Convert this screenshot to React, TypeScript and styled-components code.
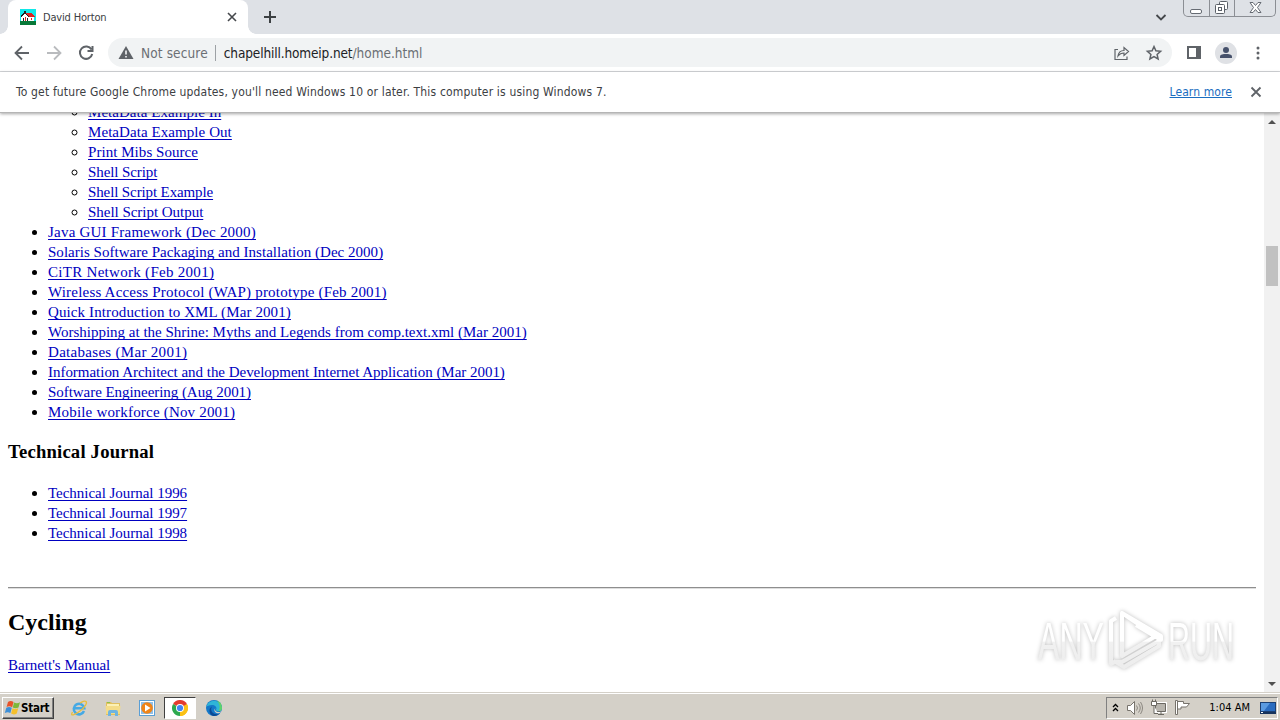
import React from 'react';
import styled, { createGlobalStyle, css } from 'styled-components';

const Global = createGlobalStyle`
  html, body { margin: 0; padding: 0; overflow: hidden; }
  * { box-sizing: border-box; }
`;
const ui = `'DejaVu Sans Condensed', 'Noto Sans', sans-serif`;

const Screen = styled.div`
  width: 1280px; height: 720px; display: flex; flex-direction: column;
  background: #fff; font-family: ${ui}; overflow: hidden;
`;
const TabStrip = styled.div`
  height: 34px; flex: none; background: #dee1e6; display: flex; align-items: flex-start;
`;
const Tab = styled.div`
  width: 240px; height: 34px; margin-left: 8px; background: #fff; border-radius: 8px 8px 0 0;
  display: flex; align-items: center; padding: 0 10px 0 12px; position: relative;
  &::before, &::after { content: ''; position: absolute; bottom: 0; width: 8px; height: 8px; }
  &::before { left: -8px; background: radial-gradient(circle at 0 0, transparent 7.5px, #fff 8px); }
  &::after { right: -8px; background: radial-gradient(circle at 100% 0, transparent 7.5px, #fff 8px); }
`;
const Text = styled.span<{ $ls?: number; $size?: number; $color?: string }>`
  white-space: pre; letter-spacing: ${p => p.$ls ?? 0}px; font-size: ${p => p.$size ?? 12}px;
  color: ${p => p.$color ?? '#3c4043'};
`;
const TabTitle = styled(Text)`margin-left: 7px; flex: 1;`;
const NewTab = styled.div`width: 28px; height: 34px; margin-left: 8px; display: flex; align-items: center; justify-content: center;`;
const Spacer = styled.div`flex: 1;`;
const TabSearch = styled.div`width: 24px; height: 34px; display: flex; align-items: center; justify-content: center; margin-right: 10px;`;
const WindowButtons = styled.div`
  display: flex; width: 93px; height: 17px; margin-right: 4px; border: 1px solid #8b8e94; border-top: 0;
  border-radius: 0 0 5px 5px;
`;
const WindowButton = styled.div<{ $w: number }>`
  width: ${p => p.$w}px; display: flex; align-items: center; justify-content: center;
  & + & { border-left: 1px solid #8b8e94; }
`;
const Toolbar = styled.div`
  height: 38px; flex: none; background: #fff; border-bottom: 1px solid #d5d7da; display: flex; align-items: center;
`;
const NavIcons = styled.div`display: flex; gap: 12px; padding-left: 12px; width: 108px;`;
const AddressBar = styled.div`
  width: 1064px; height: 29px; border-radius: 15px; background: #f1f3f4; display: flex; align-items: center; padding: 0 9px 0 8px;
`;
const WarningLabel = styled(Text)`margin-left: 5px;`;
const BarIcons = styled.div`display: flex; gap: 14px;`;
const Divider = styled.i`width: 1px; height: 16px; background: #9da1a5; margin: 0 8px 0 7px;`;
const Actions = styled.div`display: flex; align-items: center; gap: 11px; padding-left: 12px;`;
const Avatar = styled.div`width: 22px; height: 22px; border-radius: 50%; background: #dfe1e5; display: flex; align-items: center; justify-content: center;`;
const InfoBar = styled.div`
  height: 41px; flex: none; background: #fff; display: flex; align-items: center; padding: 0 18px 1px 16px;
  border-bottom: 1px solid #b5b5b5; box-shadow: 0 1px 3px rgba(0,0,0,.35); position: relative; z-index: 1;
`;
const LearnMore = styled(Text)`text-decoration: underline; margin-right: 18px;`;
const Viewport = styled.div`height: 579px; flex: none; display: flex; position: relative; overflow: hidden;`;
const Page = styled.div`
  flex: 1; overflow: hidden; padding: 0 8px; color: #000; font: 15px/20px 'Liberation Serif', serif;
`;
const List = styled.ul<{ $nested?: boolean }>`
  margin: 0; padding-left: 40px; list-style: ${p => (p.$nested ? 'circle' : 'disc')}; font-size: 16px;
  li { height: 20px; }
`;
const Outer = styled.div`margin-top: -11px;`;
const Indent = styled.div`padding-left: 40px;`;
const Link = styled.a<{ $ls?: number }>`
  color: #0000c0; font-size: 15px; text-decoration: underline; text-underline-offset: 2px; text-decoration-thickness: 1px; text-decoration-skip-ink: none;
  white-space: pre; letter-spacing: ${p => p.$ls ?? 0}px;
`;
const H3 = styled.h3`font-size: 18.7px; line-height: 22px; margin: 19px 0 20px; letter-spacing: 0.18px;`;
const Rule = styled.div`height: 2px; margin: 44px 0 19px; border-top: 1px solid #8e8e8e; border-bottom: 1px solid #dedede;`;
const H2 = styled.h2`font-size: 24px; line-height: 28px; margin: 0 0 19px;`;
const ScrollBar = styled.div`
  width: 16px; background: #f1f1f1; display: flex; flex-direction: column; align-items: center; padding: 6px 0 6px;
`;
const Thumb = styled.div`width: 12px; height: 40px; background: #c1c1c1; margin-top: 122px;`;
const Arrow = styled.i<{ $down?: boolean }>`
  width: 0; height: 0; border: 4px solid transparent;
  ${p => p.$down ? css`border-top-color: #505050; border-bottom: 0;` : css`border-bottom-color: #505050; border-top: 0; margin-top: 1px;`}
`;
const Watermark = styled.div`
  position: absolute; left: 1036px; top: 495px; height: 66px;
  filter: drop-shadow(0 0 2px rgba(0,0,0,.25));
`;
const Taskbar = styled.div`
  flex: 1; background: #d4d0c8; border-top: 1px solid #d4d0c8; box-shadow: inset 0 1px #fff; display: flex; align-items: center; padding: 3px 2px 1px;
`;
const StartButton = styled.div`
  width: 52px; height: 22px; border: 1px solid; border-color: #fff #404040 #404040 #fff; box-shadow: inset -1px -1px #808080;
  display: flex; align-items: center; padding-left: 1px; font: bold 11.5px ${ui}; letter-spacing: -0.25px; color: #000;
`;
const QuickLaunch = styled.div`display: flex; margin-left: 8px; align-items: center;`;
const TaskItem = styled.div<{ $active?: boolean }>`
  width: ${p => (p.$active ? 32 : 34)}px; height: 22px; display: flex; align-items: center; justify-content: center; margin-right: ${p => p.$active ? 1 : 0}px;
  ${p => p.$active && css`background: #fff; border: 1px solid; border-color: #404040 #fff #fff #404040;`}
`;
const Tray = styled.div`
  width: 172px; height: 22px; border: 1px solid; border-color: #808080 #fff #fff #808080; display: flex; align-items: center; padding: 0 1px 0 4px;
`;
const TrayIcons = styled.div`display: flex; align-items: center; flex: 1; gap: 6px;`;
const Clock = styled(Text)`margin-right: 10px;`;

type LinkItem = [string, number];
const nested: LinkItem[] = [
  ['MetaData Example In', 0.04], ['MetaData Example Out', 0.07], ['Print Mibs Source', 0.05],
  ['Shell Script', -0.1], ['Shell Script Example', -0.12], ['Shell Script Output', -0.03],
];
const articles: LinkItem[] = [
  ['Java GUI Framework (Dec 2000)', 0.22], ['Solaris Software Packaging and Installation (Dec 2000)', 0.02], ['CiTR Network (Feb 2001)', 0.29],
  ['Wireless Access Protocol (WAP) prototype (Feb 2001)', 0.2], ['Quick Introduction to XML (Mar 2001)', 0.11],
  ['Worshipping at the Shrine: Myths and Legends from comp.text.xml (Mar 2001)', 0], ['Databases (Mar 2001)', 0.3],
  ['Information Architect and the Development Internet Application (Mar 2001)', -0.03], ['Software Engineering (Aug 2001)', -0.05], ['Mobile workforce (Nov 2001)', 0.19],
];
const journals: LinkItem[] = [['Technical Journal 1996', -0.03], ['Technical Journal 1997', -0.03], ['Technical Journal 1998', -0.03]];
const Links = ({ items, nested }: { items: LinkItem[]; nested?: boolean }) => (
  <List $nested={nested}>{items.map(([t, ls]) => <li key={t}><Link $ls={ls}>{t}</Link></li>)}</List>
);

const Stroke = ({ d, size = 20, color = '#5f6368', w = 2 }: { d: string; size?: number; color?: string; w?: number }) => (
  <svg width={size} height={size} viewBox={`0 0 ${size} ${size}`} fill="none" stroke={color} strokeWidth={w}><path d={d} /></svg>
);
const House = () => (
  <svg width="16" height="16" viewBox="0 0 16 16" shapeRendering="crispEdges">
    <path fill="#10e8e8" d="M0 0h16v16H0z" /><path fill="#087838" d="M0 12h16v4H0z" />
    <path fill="#fff" d="M1 8l4-4 3 3h6v5H1z" /><path fill="#e02020" d="M5 4h7l3 4H9z" />
    <path fill="#202020" d="M4 2h2v2H4zM0 7l5-4 4 5H8L5 5 1 8zM3 9h1v3H3zM7 9h1v3H7z" />
    <path fill="#e02020" d="M5 8h1v4H5zM11 9h1v2h-1z" />
  </svg>
);
const WinFlag = () => (
  <svg width="17" height="16" viewBox="0 0 17 16">
    <path fill="#e8532a" d="M4 2c2-1.500 4-1 5.500 0L8.200 7.200C6 6 4.500 6 2.600 7z" /><path fill="#7db83a" d="M10 2.500c2 1 4 1 6-.2L14.500 7.500c-2 1-4 1-5.700 0z" />
    <path fill="#3c8fd8" d="M2.300 7.700c2-1 3.500-1 5.500 0L6.400 13c-2-1-3.500-1-5.600 0z" /><path fill="#f5c02c" d="M8.500 8.200c2 1 3.700 1 5.700 0L12.800 13.500c-2 1.200-4 1.200-5.700.1z" />
  </svg>
);
const Explorer = () => (
  <svg width="18" height="18" viewBox="0 0 18 18" fill="none">
    <path d="M14 12A5.300 5.300 0 1 1 14.300 9.200H5" stroke="#45a9e4" strokeWidth="2.500" />
    <path d="M2.500 13C-.5 18 5 16 10 12S17.500 4 16 2.500 12 3 10 4" stroke="#e9bd3c" strokeWidth="1.300" />
  </svg>
);
const Folder = () => (
  <svg width="18" height="18" viewBox="0 0 18 18">
    <path fill="#e0c060" d="M2 3h5l1 1h8v12H2z" /><path fill="#fbf0b5" d="M3 5h12v4H3z" /><path fill="#8bc34a" d="M3 3h3v1H3z" />
    <path fill="#f4dc88" d="M1.500 7h15l-.8 8h-13.400z" /><path fill="#6fb4e0" d="M4 17v-4q0-2 2-2h6q2 0 2 2v4h-3v-3H7v3z" />
  </svg>
);
const Player = () => (
  <svg width="16" height="16" viewBox="0 0 16 16"><path fill="#5a9fd6" d="M0 0h16v16H0z" /><path fill="#fff" d="M1 1h14v14H1z" /><path fill="#8fbfe8" d="M2 2h12v12H2z" /><circle cx="8" cy="8" r="5.800" fill="#f08418" /><path fill="#fff" d="M6 4.500v7l5.500-3.500z" /></svg>
);
const Chrome = () => (
  <svg width="16" height="16" viewBox="0 0 16 16">
    <path fill="#e33b2e" d="M8 8L1.070 4A8 8 0 0 1 14.930 4z" /><path fill="#fbc116" d="M8 8l6.930-4A8 8 0 0 1 8 16z" /><path fill="#2da94f" d="M8 8v8A8 8 0 0 1 1.070 4z" />
    <path fill="#e33b2e" d="M8 4h6.930L11.500 10z" /><path fill="#fbc116" d="M11.500 6L14.930 4A8 8 0 0 1 8 16l3.500-6z" />
    <circle cx="8" cy="8" r="4" fill="#fff" /><circle cx="8" cy="8" r="3.100" fill="#4285f4" />
  </svg>
);
const Edge = () => (
  <svg width="16" height="16" viewBox="0 0 16 16">
    <circle cx="8" cy="8" r="8" fill="#1478c8" /><path fill="#2fb5d8" d="M.2 7A8 8 0 0 1 16 8c0 2-1.500 3.300-3.500 3.300-2 0-3-.8-2.500-1.500 1.500-2-.5-4.800-4-4.800C3 5 1 6 .2 7z" />
    <path fill="#5fd36a" d="M11 .6A8 8 0 0 1 16 8c0 2-1.500 3.300-3.500 3.300 2-3 1.500-7-1.500-10.700z" />
    <path fill="#0c4a94" d="M6 6.500C4 9 5.500 14 10.500 14.300c2 .1 3.500-.8 4.200-1.800A8 8 0 0 1 7 15.900C2.500 14 2.500 8 6 6.500z" />
    <path fill="#d4d0c8" d="M9.300 8.300c-1 2.500 1 3.700 3.500 3.700 1.200 0 2-.3 3-1.200-.9 2-2.500 2.700-4.200 2.400C8.500 12.800 7.500 10 9.300 8.300z" />
  </svg>
);
const WatermarkLogo = () => (
  <svg width="200" height="66" viewBox="0 0 200 66">
    <defs><linearGradient id="fade" x1="0" y1="0" x2="0" y2="66" gradientUnits="userSpaceOnUse"><stop offset=".5" stopColor="#fff" /><stop offset=".52" stopColor="#f1f1f1" /><stop offset="1" stopColor="#ececec" /></linearGradient></defs>
    <g fill="url(#fade)" fontFamily="'Liberation Sans Narrow', 'Liberation Sans', sans-serif" fontSize="53">
      <text x="2" y="52" textLength="66" lengthAdjust="spacingAndGlyphs">ANY</text>
      <text x="132" y="52" textLength="66" lengthAdjust="spacingAndGlyphs">RUN</text>
    </g>
    <g fill="none" stroke="url(#fade)" strokeWidth="4" strokeLinejoin="round">
      <path d="M80 10l-5 3v43l5-3M86 5v43l34-20zM86 5l39 23v4L100 17M80 54l8 5 35-21v-5L86 54z" />
    </g>
  </svg>
);
const TrayChevron = () => <Stroke size={9} color="#000" w={1.300} d="M2 4l2.500-2.500L7 4M2 8l2.500-2.500L7 8" />;
const Speaker = () => (
  <svg width="18" height="16" viewBox="0 0 18 16" fill="none" stroke="#77736c"><path fill="#fff" d="M1.500 5.500h3l4-4v13l-4-4h-3z" /><path stroke="#8b8780" d="M10.500 5.500q2 2.500 0 5M12.500 3.500q3.500 4.500 0 9M14.500 2q4 6 0 12" /></svg>
);
const Network = () => (
  <svg width="18" height="17" viewBox="0 0 18 17" fill="#fff" stroke="#6b6862"><path d="M5.500 4.500h10v8h-10z" fill="#aaa79f" stroke="#fff" strokeWidth="3" /><path d="M5.500 4.500h10v8h-10zM8 15.500h6M11 12.500v3" fill="#b8b5ae" /><path d="M1.500 2.500h5v4h-5zM2.500.5v2M5.500.5v2M4 6.500v8h4" /></svg>
);
const Flag = () => (
  <svg width="17" height="17" viewBox="0 0 17 17" fill="#fff" stroke="#77736c"><path d="M1.500 1.500h2v14h-2zM3.500 2.500h6v2h6l-3 3.500h-5.500v2h-3.500z" /></svg>
);
const Desktop = () => (
  <svg width="16" height="14" viewBox="0 0 16 14"><path fill="#1b3f73" d="M0 1h16v11H0z" /><path fill="#2a6cc0" d="M1 2h14v8H1z" /><path fill="#5a9ae0" d="M1 2h9L4 10H1z" /><path fill="#17335c" d="M0 11h16v2H0z" /><path fill="#fff" d="M1 11h2v1H1z" /></svg>
);

export default function App() {
  return (
    <Screen>
      <Global />
      <TabStrip>
        <Tab>
          <House /><TabTitle $size={11} $ls={-0.17}>David Horton</TabTitle>
          <Stroke size={12} color="#45484c" w={1.600} d="M2 2l8 8M10 2l-8 8" />
        </Tab>
        <NewTab><Stroke size={12} color="#3c4043" d="M6 0v12M0 6h12" /></NewTab>
        <Spacer />
        <TabSearch><Stroke size={12} color="#45484c" w={1.800} d="M1.500 4L6 8.500 10.500 4" /></TabSearch>
        <WindowButtons>
          <WindowButton $w={25}><svg width="13" height="15"><rect x=".5" y="8.500" width="11" height="4" rx="1.500" fill="#fff" stroke="#666b73" /></svg></WindowButton>
          <WindowButton $w={25}><svg width="14" height="14" fill="#fff" stroke="#5b6068"><rect x="4.500" y=".5" width="8" height="8" rx="1" /><rect x=".5" y="3.500" width="9" height="9" rx="1" /><rect x="3.500" y="6.500" width="3" height="3" /></svg></WindowButton>
          <WindowButton $w={41}><svg width="13" height="12" fill="#fff" stroke="#666b73"><path d="M1 .5h3l2.500 3 2.500-3h3L8.500 5.500l3.500 5H9l-2.500-3-2.500 3H1l3.500-5z" /></svg></WindowButton>
        </WindowButtons>
      </TabStrip>
      <Toolbar>
        <NavIcons>
          <Stroke w={1.800} d="M17 10H4M10 3.500L3.500 10l6.500 6.500" />
          <Stroke w={1.800} color="#b9bbbe" d="M3 10h13M10 3.500l6.500 6.500-6.500 6.500" />
          <Stroke d="M15.500 6.500A6.200 6.200 0 1 0 16.200 11M16.500 3v5h-5" />
        </NavIcons>
        <AddressBar>
          <svg width="20" height="16" viewBox="0 0 20 16"><path fill="#5f6368" d="M10 1l7.500 13h-15z" /><path stroke="#fff" strokeWidth="1.500" d="M10 5.500v4M10 11v1.500" /></svg>
          <WarningLabel $size={13.5} $ls={0.13} $color="#6b6f74">Not secure</WarningLabel>
          <Divider />
          <Text $size={13.5} $ls={-0.13} $color="#202124">chapelhill.homeip.net</Text><Text $size={13.5} $color="#6b6f74">/home.html</Text>
          <Spacer />
          <BarIcons>
            <svg width="18" height="18" viewBox="0 0 18 18" fill="none" stroke="#5f6368" strokeWidth="1.200"><path d="M5 5.500H2v10h12v-3M5 12c.5-4 3-5.500 6-5.500V3.500l4.500 4-4.500 4V9c-3 0-4.500 1-6 3z" /></svg>
            <svg width="18" height="18" viewBox="0 0 18 18" fill="none" stroke="#5f6368" strokeWidth="1.500"><path d="M9 2.500l1.900 4.300 4.700.5-3.500 3.100 1 4.600L9 12.600 4.900 15l1-4.600-3.500-3.100 4.700-.5z" /></svg>
          </BarIcons>
        </AddressBar>
        <Actions>
          <svg width="20" height="20" viewBox="0 0 20 20"><path fill="#5f6368" fillRule="evenodd" d="M3 3h14v13H3zM5 5v9h7V5z" /></svg>
          <Avatar><svg width="14" height="14" viewBox="0 0 14 14" fill="#46516b"><circle cx="7" cy="4" r="3" /><path d="M1 12V10.500C1 8.500 4.500 8 7 8s6 .5 6 2.500V12z" /></svg></Avatar>
          <svg width="20" height="20" fill="#5f6368"><circle cx="10" cy="5" r="1.500" /><circle cx="10" cy="10" r="1.500" /><circle cx="10" cy="15" r="1.500" /></svg>
        </Actions>
      </Toolbar>
      <InfoBar>
        <Text $ls={0.165}>To get future Google Chrome updates, you'll need Windows 10 or later. This computer is using Windows 7.</Text>
        <Spacer />
        <LearnMore $ls={0.1} $color="#1a6dc0">Learn more</LearnMore>
        <Stroke size={12} w={1.800} d="M1.500 1.500l9 9M10.500 1.500l-9 9" />
      </InfoBar>
      <Viewport>
        <Page>
          <Outer>
            <Indent><Links items={nested} nested /></Indent>
            <Links items={articles} />
            <H3>Technical Journal</H3>
            <Links items={journals} />
            <Rule />
            <H2>Cycling</H2>
            <Link>Barnett's Manual</Link>
          </Outer>
        </Page>
        <ScrollBar><Arrow /><Thumb /><Spacer /><Arrow $down /></ScrollBar>
        <Watermark><WatermarkLogo /></Watermark>
      </Viewport>
      <Taskbar>
        <StartButton><WinFlag />Start</StartButton>
        <QuickLaunch>
          <TaskItem><Explorer /></TaskItem><TaskItem><Folder /></TaskItem><TaskItem><Player /></TaskItem>
          <TaskItem $active><Chrome /></TaskItem><TaskItem><Edge /></TaskItem>
        </QuickLaunch>
        <Spacer />
        <Tray>
          <TrayIcons><TrayChevron /><Speaker /><Network /><Flag /></TrayIcons>
          <Clock $size={11} $color="#000">1:04 AM</Clock>
          <Desktop />
        </Tray>
      </Taskbar>
    </Screen>
  );
}
